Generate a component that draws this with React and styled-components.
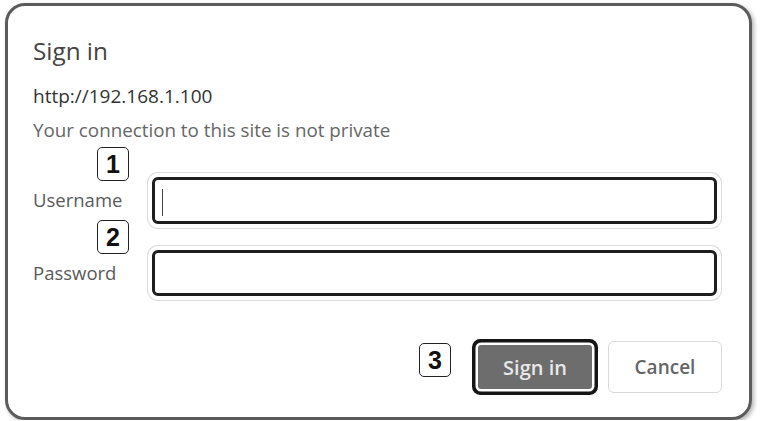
import styled, { createGlobalStyle } from 'styled-components';

const GlobalStyle = createGlobalStyle`
  body {
    margin: 0;
    background: #fff;
    font-family: "Open Sans", "Noto Sans", sans-serif;
  }
`;

const Dialog = styled.div`
  box-sizing: border-box;
  width: 747px;
  height: 417px;
  margin: 3px 0 0 5px;
  padding: 29px 27px 24px 25px;
  border: 3px solid #5b5b5b;
  border-radius: 20px;
  box-shadow: 2px 2px 4px rgba(0, 0, 0, 0.3);
  display: flex;
  flex-direction: column;
`;

const Title = styled.h1`
  margin: 0;
  font-size: 24.3px;
  font-weight: 400;
  line-height: 32px;
  color: #444;
`;

const Url = styled.div`
  margin-top: 17px;
  font-size: 19px;
  line-height: 24px;
  color: #333;
`;

const Notice = styled.div`
  margin-top: 10px;
  font-size: 18.8px;
  line-height: 24px;
  color: #666;
`;

const Fields = styled.div`
  margin-top: 35px;
  display: flex;
  flex-direction: column;
  gap: 26px;
`;

const Row = styled.div`
  display: grid;
  grid-template-columns: 119px 1fr;
`;

const LabelCell = styled.label`
  position: relative;
  display: flex;
  align-items: center;
  padding-bottom: 2px;
  font-size: 18.5px;
  color: #5a5a5a;
`;

const Badge = styled.span`
  box-sizing: border-box;
  width: 32px;
  height: 34px;
  border: 1.5px solid #222;
  border-radius: 5px;
  background: #fff;
  display: inline-flex;
  align-items: center;
  justify-content: center;
  font-family: "Liberation Sans", Arial, sans-serif;
  font-weight: 700;
  font-size: 25px;
  color: #111;
`;

const FieldBadge = styled(Badge)`
  position: absolute;
  top: -30px;
  left: 64px;
`;

const InputShell = styled.div`
  box-sizing: border-box;
  height: ${(p) => p.$h}px;
  margin-right: 5px;
  border: 3px solid #1e1e1e;
  border-radius: 6px;
  box-shadow: 0 0 0 4px #fff, 0 0 0 5px #dcdcdc;
  display: flex;
  align-items: center;
  padding-left: 7px;
`;

const Caret = styled.span`
  width: 1px;
  height: 27px;
  margin-top: 4px;
  background: #444;
`;

const Input = styled.input`
  flex: 1;
  border: none;
  outline: none;
  background: transparent;
  font: inherit;
`;

const Actions = styled.div`
  margin-top: auto;
  display: flex;
  justify-content: flex-end;
  align-items: center;
`;

const ActionBadge = styled(Badge)`
  margin-right: 27px;
  margin-bottom: 14px;
`;

const Button = styled.button`
  box-sizing: border-box;
  width: 114px;
  font-family: "Open Sans", "Noto Sans", sans-serif;
  font-size: 19px;
  font-weight: 600;
  cursor: pointer;
`;

const PrimaryButton = styled(Button)`
  height: 44px;
  margin-right: 16px;
  border: none;
  border-radius: 3px;
  background: #6d6d6d;
  color: #e8e8e8;
  font-size: 20px;
  box-shadow: 0 0 0 2.5px #fff, 0 0 0 6px #151515;
`;

const CancelButton = styled(Button)`
  height: 52px;
  border: 1px solid #d9d9d9;
  border-radius: 6px;
  background: #fff;
  color: #666;
`;

const fields = [
  { id: 1, label: 'Username', type: 'text', height: 47, focused: true },
  { id: 2, label: 'Password', type: 'password', height: 46, focused: false },
];

export default function App() {
  return (
    <>
      <GlobalStyle />
      <Dialog>
        <Title>Sign in</Title>
        <Url>http://192.168.1.100</Url>
        <Notice>Your connection to this site is not private</Notice>
        <Fields>
          {fields.map((f) => (
            <Row key={f.id}>
              <LabelCell>
                <FieldBadge>{f.id}</FieldBadge>
                {f.label}
              </LabelCell>
              <InputShell $h={f.height}>
                {f.focused && <Caret />}
                <Input type={f.type} aria-label={f.label} />
              </InputShell>
            </Row>
          ))}
        </Fields>
        <Actions>
          <ActionBadge>3</ActionBadge>
          <PrimaryButton>Sign in</PrimaryButton>
          <CancelButton>Cancel</CancelButton>
        </Actions>
      </Dialog>
    </>
  );
}
